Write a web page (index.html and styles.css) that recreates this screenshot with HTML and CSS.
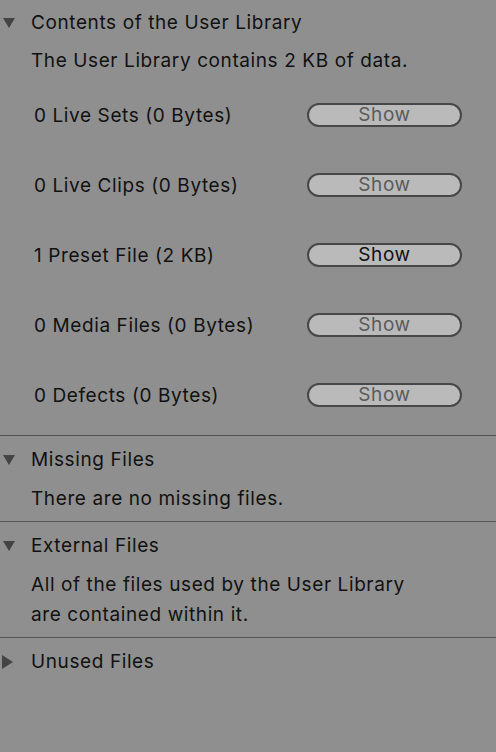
FILE: index.html
```html
<!DOCTYPE html>
<html>
<head>
<meta charset="utf-8">
<link rel="stylesheet" href="styles.css">
</head>
<body>
<div class="panel">
  <section class="section first">
    <div class="header"><span class="tri down"></span><span class="title">Contents of the User Library</span></div>
    <div class="desc">The User Library contains 2 KB of data.</div>
    <div class="rows">
      <div class="row"><span class="label">0 Live Sets (0 Bytes)</span><button class="btn disabled">Show</button></div>
      <div class="row"><span class="label">0 Live Clips (0 Bytes)</span><button class="btn disabled">Show</button></div>
      <div class="row"><span class="label">1 Preset File (2 KB)</span><button class="btn">Show</button></div>
      <div class="row"><span class="label">0 Media Files (0 Bytes)</span><button class="btn disabled">Show</button></div>
      <div class="row"><span class="label">0 Defects (0 Bytes)</span><button class="btn disabled">Show</button></div>
    </div>
  </section>
  <section class="section">
    <div class="header"><span class="tri down"></span><span class="title">Missing Files</span></div>
    <div class="desc">There are no missing files.</div>
  </section>
  <section class="section">
    <div class="header"><span class="tri down"></span><span class="title">External Files</span></div>
    <div class="desc">All of the files used by the User Library<br>are contained within it.</div>
  </section>
  <section class="section last">
    <div class="header"><span class="tri right"></span><span class="title">Unused Files</span></div>
  </section>
</div>
</body>
</html>
```
FILE: styles.css
```css
html, body {
  margin: 0;
  padding: 0;
  background: #8f8f8f;
}
body {
  width: 496px;
  height: 752px;
  overflow: hidden;
  font-family: Inter, "Noto Sans", sans-serif;
  font-size: 19px;
  letter-spacing: 0.6px;
  color: #111;
}
.section {
  border-top: 1px solid #555;
  padding-bottom: 7px;
}
.section.first {
  border-top: none;
  padding-bottom: 5px;
}
.header {
  display: flex;
  align-items: center;
  height: 48px;
}
.first .header {
  height: 45px;
}
.tri {
  width: 31px;
  display: flex;
  align-items: center;
  padding-left: 3px;
  box-sizing: border-box;
}
.tri.down::before {
  content: "";
  border-left: 6.5px solid transparent;
  border-right: 6.5px solid transparent;
  border-top: 10px solid #444;
}
.tri.right {
  padding-left: 2px;
}
.tri.right::before {
  content: "";
  border-top: 7px solid transparent;
  border-bottom: 7px solid transparent;
  border-left: 11px solid #444;
}
.title {
  line-height: 24px;
}
.desc {
  padding-left: 31px;
  line-height: 30px;
}
.first .desc {
  margin-top: 1px;
  margin-bottom: 4px;
}
.rows {
  display: flex;
  flex-direction: column;
}
.row {
  display: flex;
  align-items: center;
  height: 70px;
  padding: 0 34px;
}
.label {
  flex: 1;
}
.btn {
  width: 155px;
  height: 24px;
  box-sizing: border-box;
  border: 2px solid #474747;
  border-radius: 12px;
  background: #bababa;
  font-family: Inter, "Noto Sans", sans-serif;
  font-size: 19px;
  letter-spacing: 0.6px;
  color: #111;
  padding: 0;
  line-height: 20px;
}
.btn.disabled {
  color: #5a5a5a;
}
```
